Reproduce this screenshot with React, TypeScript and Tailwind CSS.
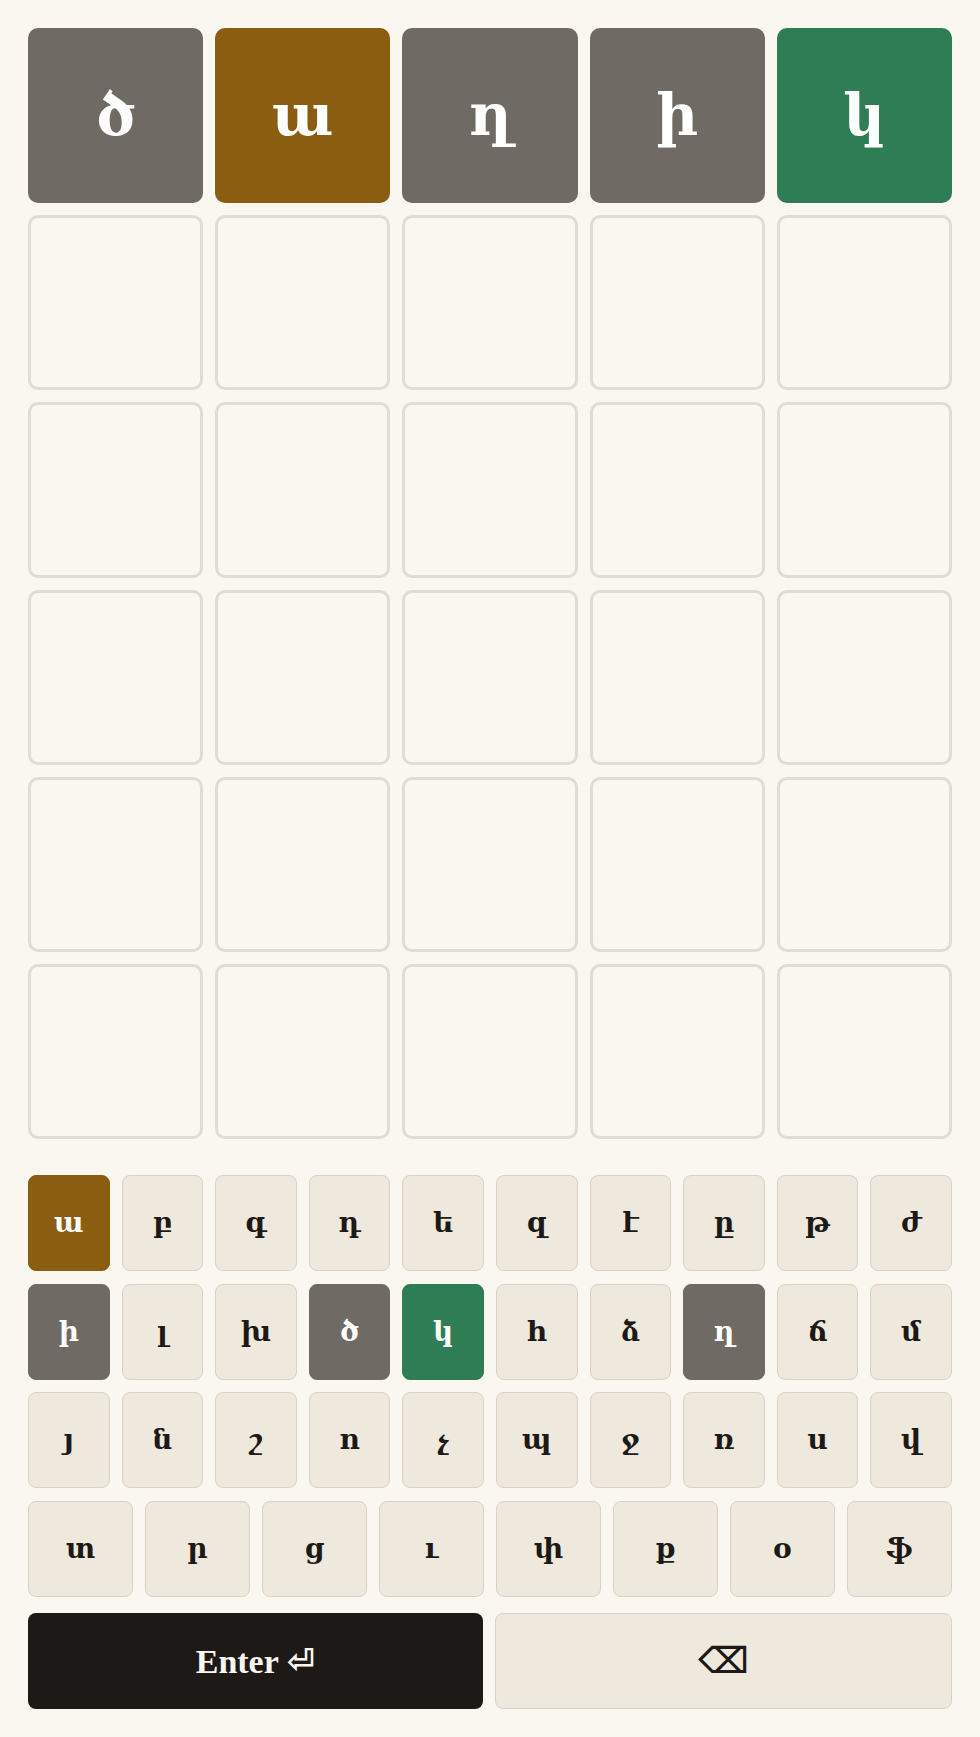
import React from "react";

type S = "gray" | "gold" | "green" | "none";

const tileBg: Record<S, string> = {
  gray: "bg-[#6f6a63] text-white",
  gold: "bg-[#8a5d10] text-white",
  green: "bg-[#2e7d54] text-white",
  none: "bg-[#faf7f0] border-[3px] border-[#e0dcd4]",
};

const keyBg: Record<S, string> = {
  gray: "bg-[#6f6a63] text-white border border-[#6f6a63]",
  gold: "bg-[#8a5d10] text-white border border-[#8a5d10]",
  green: "bg-[#2e7d54] text-white border border-[#2e7d54]",
  none: "bg-[#efe9dd] text-[#1d1916] border border-[#d8d2c6]",
};

const guess: [string, S][] = [
  ["ծ", "gray"],
  ["ա", "gold"],
  ["ղ", "gray"],
  ["ի", "gray"],
  ["կ", "green"],
];

const rows: string[][] = [
  ["ա", "բ", "գ", "դ", "ե", "զ", "է", "ը", "թ", "ժ"],
  ["ի", "լ", "խ", "ծ", "կ", "հ", "ձ", "ղ", "ճ", "մ"],
  ["յ", "ն", "շ", "ո", "չ", "պ", "ջ", "ռ", "ս", "վ"],
  ["տ", "ր", "ց", "ւ", "փ", "ք", "օ", "ֆ"],
];

const keyState: Record<string, S> = {
  ա: "gold",
  ի: "gray",
  ծ: "gray",
  կ: "green",
  ղ: "gray",
};

const font = { fontFamily: '"Liberation Serif", "DejaVu Serif", serif' };
const sym = { fontFamily: '"DejaVu Sans", sans-serif' };

export default function App() {
  return (
    <div
      className="min-h-[1737px] w-[980px] bg-[#faf7f0] px-[28px] pt-[28px]"
      style={font}
    >
      <div className="grid grid-cols-5 gap-3">
        {Array.from({ length: 30 }).map((_, i) => {
          const g = i < 5 ? guess[i] : null;
          const s: S = g ? g[1] : "none";
          return (
            <div
              key={i}
              className={`aspect-square rounded-[10px] flex items-center justify-center text-[58px] font-bold ${tileBg[s]}`}
            >
              {g ? g[0] : ""}
            </div>
          );
        })}
      </div>
      <div className="mt-[36px] flex flex-col gap-[12.5px]">
        {rows.map((r, ri) => (
          <div key={ri} className="flex gap-3">
            {r.map((k) => (
              <div
                key={k}
                className={`flex-1 h-[96px] rounded-[8px] flex items-center justify-center text-[28px] font-bold ${keyBg[keyState[k] ?? "none"]}`}
              >
                {k}
              </div>
            ))}
          </div>
        ))}
        <div className="mt-[4px] flex gap-3">
          <div className="flex-1 h-[96px] rounded-[8px] bg-[#1d1916] text-[#faf7f0] flex items-center justify-center text-[34px] font-bold">
            Enter
            <span className="ml-[8px] font-bold" style={sym}>
              ⏎
            </span>
          </div>
          <div className="flex-1 h-[96px] rounded-[8px] bg-[#efe9dd] border border-[#d8d2c6] text-[#1d1916] flex items-center justify-center text-[36px] font-bold">
            <span style={sym}>⌫</span>
          </div>
        </div>
      </div>
    </div>
  );
}
